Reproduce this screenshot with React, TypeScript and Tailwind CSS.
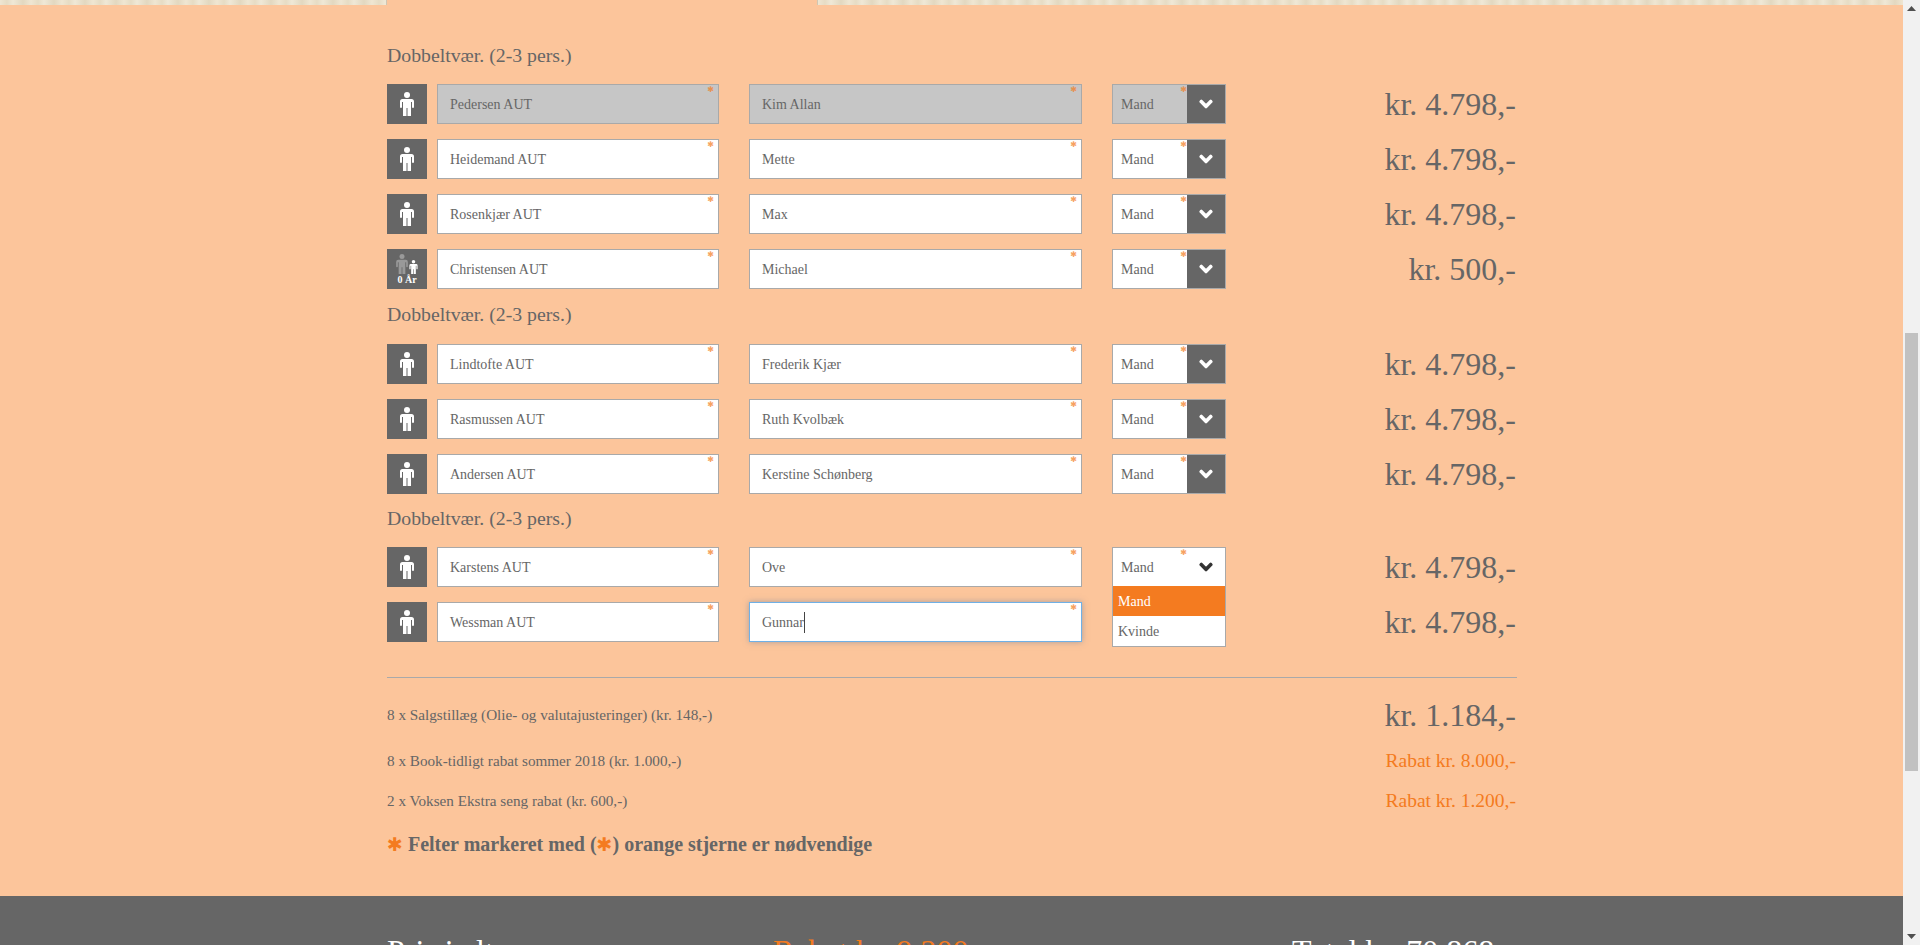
// App.tsx
import React from 'react';
import { FaChevronDown } from 'react-icons/fa';

type Person = { last: string; first: string; price: string; child?: boolean; locked?: boolean; focused?: boolean; open?: boolean };

const groups: { mt: string; mb: string; people: Person[] }[] = [
  {
    mt: 'mt-[39px]',
    mb: 'mb-[18px]',
    people: [
      { last: 'Pedersen AUT', first: 'Kim Allan', price: 'kr. 4.798,-', locked: true },
      { last: 'Heidemand AUT', first: 'Mette', price: 'kr. 4.798,-' },
      { last: 'Rosenkjær AUT', first: 'Max', price: 'kr. 4.798,-' },
      { last: 'Christensen AUT', first: 'Michael', price: 'kr. 500,-', child: true },
    ],
  },
  {
    mt: 'mt-[14px]',
    mb: 'mb-[19px]',
    people: [
      { last: 'Lindtofte AUT', first: 'Frederik Kjær', price: 'kr. 4.798,-' },
      { last: 'Rasmussen AUT', first: 'Ruth Kvolbæk', price: 'kr. 4.798,-' },
      { last: 'Andersen AUT', first: 'Kerstine Schønberg', price: 'kr. 4.798,-' },
    ],
  },
  {
    mt: 'mt-[13px]',
    mb: 'mb-[18px]',
    people: [
      { last: 'Karstens AUT', first: 'Ove', price: 'kr. 4.798,-', open: true },
      // this row's select sits behind the open dropdown of the row above
      { last: 'Wessman AUT', first: 'Gunnar', price: 'kr. 4.798,-', focused: true },
    ],
  },
];

const PersonIcon = ({ className }: { className: string }) => (
  <svg viewBox="0 0 14 24" className={className} fill="currentColor">
    <circle cx="7" cy="3" r="3" />
    <path d="M2.5 7H11.5Q14 7 14 9.5V15Q14 16 13 16Q12 16 12 15V10H11V24H7.5V16H6.5V24H3V10H2V15Q2 16 1 16Q0 16 0 15V9.5Q0 7 2.5 7Z" />
  </svg>
);

const Star = ({ className }: { className: string }) => (
  <span className={`absolute font-['DejaVu_Sans',sans-serif] text-[8px] leading-[8px] text-[#f47b20] opacity-70 ${className}`}>✱</span>
);

const Chevron = ({ className }: { className: string }) => (
  <div className={`ml-auto flex h-full w-[38px] items-center justify-center ${className}`}>
    <FaChevronDown className="h-[14px] w-[14px]" stroke="currentColor" strokeWidth={50} />
  </div>
);

const Row = ({ p }: { p: Person }) => (
  <div className="flex h-10 items-center">
    <div className="flex h-10 w-10 flex-col items-center justify-center bg-[#666666] text-white">
      {p.child ? (
        <>
          <div className="flex items-end gap-[1px]">
            <PersonIcon className="h-5 w-3 text-[#999999]" />
            <PersonIcon className="h-[14px] w-[9px]" />
          </div>
          <span className="text-[10px] font-bold leading-[11px]">0 År</span>
        </>
      ) : (
        <PersonIcon className="h-6 w-[14px]" />
      )}
    </div>

    <div className={`relative ml-[10px] flex h-10 w-[282px] items-center border border-[#a9a9a9] pl-3 text-[14px] ${p.locked ? 'bg-[#c6c6c6]' : 'bg-white'}`}>
      {p.last}
      <Star className="right-[4px] top-[1px]" />
    </div>

    <div
      className={`relative ml-[30px] flex h-10 w-[333px] items-center border pl-3 text-[14px] ${
        p.locked ? 'bg-[#c6c6c6]' : 'bg-white'
      } ${p.focused ? 'border-[#6fb0e6] shadow-[0_0_6px_rgba(90,120,160,0.5)]' : 'border-[#a9a9a9]'}`}
    >
      {p.first}
      {p.focused && <span className="h-[21px] w-px bg-[#444444]" />}
      <Star className="right-[4px] top-[1px]" />
    </div>

    {p.focused ? (
      <div className="ml-[30px] w-[114px]" />
    ) : (
      <div className={`relative ml-[30px] flex h-10 w-[114px] items-center border border-[#a9a9a9] pl-[8px] text-[14px] ${p.locked ? 'bg-[#c6c6c6]' : 'bg-white'}`}>
        Mand
        <Star className="right-[38px] top-[1px]" />
        {p.open ? (
          <>
            <Chevron className="text-[#333333]" />
            <div className="absolute left-[-1px] top-full z-10 w-[114px] border border-t-0 border-[#a9a9a9] bg-white">
              <div className="flex h-[30px] items-center bg-[#f47b20] pl-[5px] text-white">Mand</div>
              <div className="flex h-[30px] items-center pl-[5px]">Kvinde</div>
            </div>
          </>
        ) : (
          <Chevron className="bg-[#666666] text-white" />
        )}
      </div>
    )}

    <div className="ml-auto pr-px text-[32px] leading-10">{p.price}</div>
  </div>
);

export default function App() {
  return (
    <div className="flex h-[945px] overflow-hidden bg-[#f1f1f1] font-['Liberation_Serif',serif] text-[#666666]">
      <div className="w-[1903px] bg-[#fcc59b]">
        {/* textured strip above the form, the active tab cuts through it */}
        <div className="flex h-[5px]">
          <div className="w-[387px] border-r border-[#cfc6b2] bg-[repeating-linear-gradient(90deg,#efe6d2_0px,#e6dcc4_7px,#efe8d6_13px,#e2d8c0_23px,#efe6d2_31px)]" />
          <div className="w-[430px]" />
          <div className="flex-1 border-l border-[#cfc6b2] bg-[repeating-linear-gradient(90deg,#efe6d2_0px,#e6dcc4_7px,#efe8d6_13px,#e2d8c0_23px,#efe6d2_31px)]" />
        </div>

        <div className="ml-[387px] w-[1130px]">
          {groups.map((g, i) => (
            <div key={i} className={g.mt}>
              <h2 className={`${g.mb} text-[19.8px] leading-[22px]`}>Dobbeltvær. (2-3 pers.)</h2>
              <div className="flex flex-col gap-[15px]">
                {g.people.map((p) => (
                  <Row key={p.last} p={p} />
                ))}
              </div>
            </div>
          ))}

          <div className="mt-[35px] h-px bg-[#a9a9a9]" />

          <div className="mt-[17px] flex h-10 items-center justify-between text-[15.2px]">
            <span>8 x Salgstillæg (Olie- og valutajusteringer) (kr. 148,-)</span>
            <span className="pr-px text-[32px]">kr. 1.184,-</span>
          </div>
          <div className="mt-[14px] flex h-6 items-center justify-between text-[15.2px]">
            <span>8 x Book-tidligt rabat sommer 2018 (kr. 1.000,-)</span>
            <span className="pr-px text-[19.5px] text-[#f47b20]">Rabat kr. 8.000,-</span>
          </div>
          <div className="mt-[16px] flex h-6 items-center justify-between text-[15.2px]">
            <span>2 x Voksen Ekstra seng rabat (kr. 600,-)</span>
            <span className="pr-px text-[19.5px] text-[#f47b20]">Rabat kr. 1.200,-</span>
          </div>

          <div className="mt-[19px] flex h-6 items-center text-[20px] font-bold">
            <span className="mr-[5px] font-['DejaVu_Sans',sans-serif] text-[19px] text-[#f47b20]">✱</span>
            Felter markeret med (
            <span className="font-['DejaVu_Sans',sans-serif] text-[19px] text-[#f47b20]">✱</span>
            ) orange stjerne er nødvendige
          </div>
        </div>

        <div className="mt-[40px] flex bg-[#666666] pl-[387px] pt-[37px] text-[32px] leading-9 text-white">
          <div className="w-[386px]">Pris i alt</div>
          <div className="w-[519px] text-[#f47b20]">Rabat kr. 9.200,-</div>
          <div>Total kr. 70.868,-</div>
        </div>
      </div>

      {/* page scrollbar */}
      <div className="flex w-[17px] flex-col items-center">
        <svg viewBox="0 0 9 5" className="mt-[6px] h-[5px] w-[9px] text-[#505050]" fill="currentColor"><path d="M4.5 0L9 5H0Z" /></svg>
        <div className="mt-[322px] h-[438px] w-[13px] bg-[#c1c1c1]" />
        <svg viewBox="0 0 9 5" className="mb-[6px] mt-auto h-[5px] w-[9px] text-[#505050]" fill="currentColor"><path d="M0 0H9L4.5 5Z" /></svg>
      </div>
    </div>
  );
}
